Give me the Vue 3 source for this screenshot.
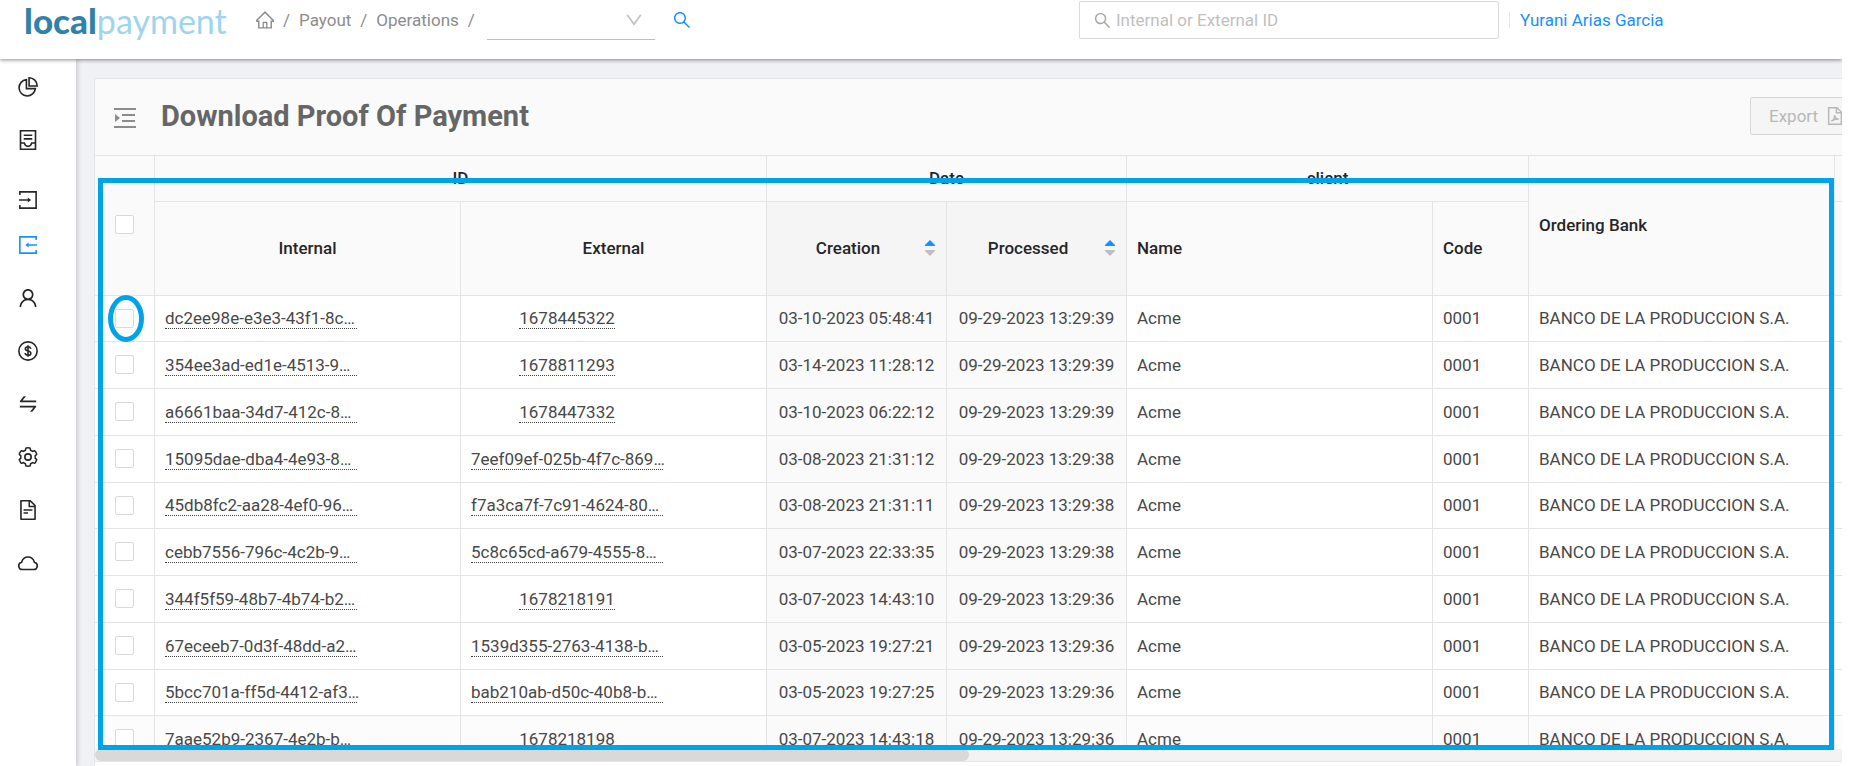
<script setup>
import { ref } from 'vue'

const query = ref('')
const allSelected = ref(false)

const rows = ref([
  ['dc2ee98e-e3e3-43f1-8c…', '1678445322', '03-10-2023 05:48:41', '09-29-2023 13:29:39'],
  ['354ee3ad-ed1e-4513-9…', '1678811293', '03-14-2023 11:28:12', '09-29-2023 13:29:39'],
  ['a6661baa-34d7-412c-8…', '1678447332', '03-10-2023 06:22:12', '09-29-2023 13:29:39'],
  ['15095dae-dba4-4e93-8…', '7eef09ef-025b-4f7c-869…', '03-08-2023 21:31:12', '09-29-2023 13:29:38'],
  ['45db8fc2-aa28-4ef0-96…', 'f7a3ca7f-7c91-4624-80…', '03-08-2023 21:31:11', '09-29-2023 13:29:38'],
  ['cebb7556-796c-4c2b-9…', '5c8c65cd-a679-4555-8…', '03-07-2023 22:33:35', '09-29-2023 13:29:38'],
  ['344f5f59-48b7-4b74-b2…', '1678218191', '03-07-2023 14:43:10', '09-29-2023 13:29:36'],
  ['67eceeb7-0d3f-48dd-a2…', '1539d355-2763-4138-b…', '03-05-2023 19:27:21', '09-29-2023 13:29:36'],
  ['5bcc701a-ff5d-4412-af3…', 'bab210ab-d50c-40b8-b…', '03-05-2023 19:27:25', '09-29-2023 13:29:36'],
  ['7aae52b9-2367-4e2b-b…', '1678218198', '03-07-2023 14:43:18', '09-29-2023 13:29:36'],
].map(([internal, external, creation, processed]) => ({
  internal, external, creation, processed,
  name: 'Acme', code: '0001', bank: 'BANCO DE LA PRODUCCION S.A.', selected: false,
})))

const isLong = (id) => id.length > 12
</script>

<template>
  <div class="page">
    <header class="topbar">
      <a class="logo" href="#" aria-label="localpayment"><span class="logo-a">local</span><span class="logo-b">payment</span></a>
      <nav class="crumbs" aria-label="Breadcrumb">
        <a href="#" aria-label="Home">
          <svg class="i-home" viewBox="64 64 896 896"><path d="M946.5 505L560.1 118.8l-25.9-25.9a31.5 31.5 0 0 0-44.4 0L77.5 505a63.9 63.9 0 0 0-18.8 46c.4 35.2 29.7 63.3 64.9 63.3h42.5V940h691.8V614.3h43.4c17.1 0 33.2-6.7 45.3-18.8a63.6 63.6 0 0 0 18.7-45.3c0-17-6.7-33.1-18.8-45.2zM568 868H456V664h112v204zm217.9-325.7V868H632V640c0-22.1-17.9-40-40-40H432c-22.1 0-40 17.9-40 40v228H238.1V542.3h-96l370-369.7 23.1 23.1L882 542.3h-96.1z" /></svg>
        </a>
        <span>/</span><a href="#">Payout</a><span>/</span><a href="#">Operations</a><span>/</span>
      </nav>
      <label class="picker">
        <select aria-label="Operation"><option></option></select>
        <svg viewBox="64 64 896 896"><path d="M884 256h-75c-5.100 0-9.900 2.500-12.900 6.600L512 654.200 227.900 262.600c-3-4.100-7.800-6.600-12.900-6.600h-75c-6.500 0-10.300 7.400-6.500 12.700l352.600 486.100c12.800 17.600 39 17.600 51.700 0l352.600-486.100c3.900-5.300.1-12.700-6.400-12.700z" /></svg>
      </label>
      <button class="find" aria-label="Search operation">
        <svg viewBox="64 64 896 896"><path d="M909.600 854.500L649.900 594.800C690.200 542.700 712 479 712 412c0-80.200-31.300-155.400-87.900-212.100-56.600-56.700-132-87.900-212.100-87.900s-155.500 31.300-212.100 87.900C143.200 256.500 112 331.800 112 412c0 80.100 31.300 155.500 87.900 212.100C256.500 680.800 331.800 712 412 712c67 0 130.600-21.800 182.700-62l259.700 259.600a8.200 8.200 0 0 0 11.600 0l43.600-43.500a8.200 8.200 0 0 0 0-11.600zM570.400 570.400C528 612.700 471.800 636 412 636s-116-23.300-158.400-65.600C211.300 528 188 471.800 188 412s23.300-116.100 65.600-158.400C296 211.300 352.200 188 412 188s116.100 23.200 158.400 65.600S636 352.200 636 412s-23.300 116.100-65.600 158.400z" /></svg>
      </button>
      <label class="search">
        <svg viewBox="64 64 896 896"><path d="M909.600 854.500L649.900 594.800C690.200 542.700 712 479 712 412c0-80.200-31.300-155.400-87.900-212.100-56.600-56.700-132-87.900-212.100-87.900s-155.500 31.300-212.100 87.900C143.200 256.500 112 331.800 112 412c0 80.100 31.300 155.500 87.900 212.100C256.500 680.800 331.800 712 412 712c67 0 130.600-21.800 182.700-62l259.700 259.600a8.200 8.200 0 0 0 11.600 0l43.600-43.500a8.200 8.200 0 0 0 0-11.600zM570.400 570.400C528 612.700 471.800 636 412 636s-116-23.300-158.400-65.600C211.300 528 188 471.800 188 412s23.300-116.100 65.600-158.400C296 211.300 352.200 188 412 188s116.100 23.200 158.400 65.600S636 352.200 636 412s-23.300 116.100-65.600 158.400z" /></svg>
        <input v-model="query" type="text" placeholder="Internal or External ID" aria-label="Internal or External ID" />
      </label>
      <div class="user"><a href="#">Yurani Arias Garcia</a></div>
    </header>

    <div class="body">
      <nav class="side" aria-label="Main menu">
        <a href="#" aria-label="Dashboard">
          <svg class="line" viewBox="64 64 896 896"><path d="M440 182A366 366 0 1 0 842 584H440z" /><path d="M560 100V464H924A364 364 0 0 0 560 100z" /></svg>
        </a>
        <a href="#" aria-label="Reports">
          <svg class="line" viewBox="64 64 896 896"><path d="M176 100H848V924H176zM320 300H704M320 460H704M176 644H344C370 760 440 796 512 796S654 760 680 644H848" /></svg>
        </a>
        <div class="group">
          <a href="#" aria-label="Payin">
            <svg class="line" viewBox="64 64 896 896"><path d="M148 290V148H876V876H148V734M110 512H520" /><path class="solid" d="M500 400L650 512L500 624z" /></svg>
          </a>
          <a href="#" class="active" aria-label="Payout">
            <svg class="line" viewBox="64 64 896 896"><path d="M876 290V148H148V876H876V734M914 512H520" /><path class="solid" d="M540 400L390 512L540 624z" /></svg>
          </a>
        </div>
        <a href="#" aria-label="Users">
          <svg viewBox="64 64 896 896"><path d="M858.5 763.6a374 374 0 0 0-80.6-119.5 375.63 375.63 0 0 0-119.5-80.6c-.4-.2-.8-.3-1.2-.5C719.5 518 760 444.7 760 362c0-137-111-248-248-248S264 225 264 362c0 82.7 40.5 156 102.8 201.1-.4.2-.8.3-1.2.5-44.8 18.9-85 46-119.5 80.6a375.63 375.63 0 0 0-80.6 119.5A371.7 371.7 0 0 0 136 901.8a8 8 0 0 0 8 8.2h60c4.4 0 7.9-3.5 8-7.8 2-77.2 33-149.5 87.8-204.3 56.7-56.7 132-87.9 212.2-87.9s155.5 31.2 212.2 87.9C779 752.7 810 825 812 902.2c.1 4.4 3.6 7.800 8 7.800h60a8 8 0 0 0 8-8.200c-1-47.800-10.900-94.300-29.500-138.200zM512 534c-45.900 0-89.100-17.900-121.600-50.400S340 407.900 340 362c0-45.900 17.900-89.100 50.400-121.600S466.100 190 512 190s89.100 17.900 121.600 50.400S684 316.100 684 362c0 45.900-17.900 89.100-50.400 121.600S557.900 534 512 534z" /></svg>
        </a>
        <a href="#" aria-label="Rates">
          <svg class="line" viewBox="64 64 896 896"><circle cx="512" cy="512" r="410" /><path d="M634 420C626 350 580 322 512 322S392 356 392 416C392 470 434 494 512 512S640 556 640 610C640 670 590 702 512 702S390 672 384 604M512 254V770" /></svg>
        </a>
        <a href="#" aria-label="Transfers">
          <svg viewBox="64 64 896 896"><path d="M847.900 592H152c-4.400 0-8 3.600-8 8v60c0 4.400 3.600 8 8 8h605.200L612.900 851c-4.100 5.200-.4 13 6.300 13h72.500c4.900 0 9.500-2.200 12.600-6.100l168.800-214.100c16.500-21 1.600-51.800-25.200-51.800zM872 356H266.800l144.300-183c4.100-5.200.4-13-6.300-13h-72.500c-4.900 0-9.500 2.200-12.600 6.100L150.900 380.200c-16.500 21-1.600 51.800 25.100 51.800h696c4.400 0 8-3.600 8-8v-60c0-4.400-3.600-8-8-8z" /></svg>
        </a>
        <a href="#" aria-label="Settings">
          <svg class="line" viewBox="64 64 896 896">
            <path transform="translate(41 41) scale(.92)" d="M924.8 625.7l-65.5-56c3.1-19 4.7-38.4 4.7-57.8s-1.6-38.8-4.7-57.8l65.5-56a32.03 32.03 0 0 0 9.3-35.2l-.9-2.6a443.74 443.74 0 0 0-79.7-137.9l-1.8-2.1a32.12 32.12 0 0 0-35.1-9.5l-81.3 28.9c-30-24.6-63.5-44-99.7-57.6l-15.7-85a32.05 32.05 0 0 0-25.8-25.7l-2.7-.5c-52.1-9.4-106.9-9.4-159 0l-2.7.5a32.05 32.05 0 0 0-25.8 25.7l-15.8 85.4a351.86 351.86 0 0 0-99 57.4l-81.9-29.1a32 32 0 0 0-35.1 9.5l-1.8 2.1a446.02 446.02 0 0 0-79.7 137.9l-.9 2.6c-4.5 12.5-.8 26.5 9.3 35.2l66.3 56.6c-3.1 18.8-4.6 38-4.6 57.1 0 19.2 1.5 38.4 4.6 57.1L99 625.5a32.03 32.03 0 0 0-9.3 35.2l.9 2.6c18.1 50.4 44.9 96.9 79.7 137.9l1.8 2.1a32.12 32.12 0 0 0 35.1 9.5l81.9-29.1c29.8 24.5 63.1 43.9 99 57.4l15.8 85.4a32.05 32.05 0 0 0 25.8 25.7l2.7.5a449.4 449.4 0 0 0 159 0l2.7-.5a32.05 32.05 0 0 0 25.8-25.7l15.7-85a350 350 0 0 0 99.7-57.6l81.3 28.9a32 32 0 0 0 35.1-9.5l1.8-2.1c34.8-41.1 61.6-87.5 79.7-137.9l.9-2.6c4.5-12.3.8-26.3-9.3-35z" />
            <circle cx="512" cy="512" r="142" />
          </svg>
        </a>
        <a href="#" aria-label="Documents">
          <svg viewBox="64 64 896 896"><path d="M854.600 288.600L639.400 73.400c-6-6-14.100-9.400-22.600-9.400H192c-17.700 0-32 14.300-32 32v832c0 17.700 14.300 32 32 32h640c17.700 0 32-14.300 32-32V311.300c0-8.500-3.400-16.700-9.400-22.700zM790.200 326H602V137.800L790.200 326zm1.800 562H232V136h302v216a42 42 0 0 0 42 42h216v494zM504 618H320c-4.400 0-8 3.600-8 8v48c0 4.400 3.600 8 8 8h184c4.400 0 8-3.600 8-8v-48c0-4.400-3.600-8-8-8zM312 490v48c0 4.400 3.600 8 8 8h384c4.400 0 8-3.600 8-8v-48c0-4.400-3.600-8-8-8H320c-4.400 0-8 3.600-8 8z" /></svg>
        </a>
        <a href="#" aria-label="Cloud">
          <svg class="line" viewBox="64 64 896 896"><path d="M265 804A165 165 0 0 1 226 478C270 330 380 246 512 246S754 330 798 478A165 165 0 0 1 759 804z" /></svg>
        </a>
      </nav>

      <main class="card">
        <div class="titlebar">
          <button class="fold" aria-label="Expand menu">
            <svg viewBox="0 0 22 20"><path d="M0 0h22v2H0zM8 6h13v2H8zM8 12h13v2H8zM0 18h22v2H0zM1 6l5 4-5 4z" /></svg>
          </button>
          <h1>Download Proof Of Payment</h1>
          <button class="export" disabled>
            Export
            <svg class="line" viewBox="64 64 896 896"><path d="M196 100H610L828 318V924H196zM580 110V350H820" /><path d="M330 770C430 730 500 600 490 470C520 620 590 670 700 660C560 650 430 690 330 770z" /></svg>
          </button>
        </div>

        <div class="tablewrap">
          <table>
            <colgroup>
              <col class="c-check" /><col class="c-wide" /><col class="c-wide" /><col class="c-date" /><col class="c-date" />
              <col class="c-wide" /><col class="c-code" /><col class="c-wide" /><col />
            </colgroup>
            <thead>
              <tr class="h1">
                <th rowspan="2" class="mid"><input v-model="allSelected" type="checkbox" aria-label="Select all" /></th>
                <th colspan="2" class="mid">ID</th>
                <th colspan="2" class="mid">Date</th>
                <th colspan="2" class="mid">client</th>
                <th rowspan="2">Ordering Bank</th>
                <th></th>
              </tr>
              <tr class="h2">
                <th class="mid">Internal</th>
                <th class="mid">External</th>
                <th v-for="label in ['Creation', 'Processed']" :key="label" class="sorted">
                  <div class="sort">
                    <span>{{ label }}</span>
                    <svg viewBox="0 0 10 16"><path class="up" d="M5 0L10 5V6H0V5z" /><path class="down" d="M0 10H10V11L5 16L0 11z" /></svg>
                  </div>
                </th>
                <th>Name</th>
                <th>Code</th>
                <th></th>
              </tr>
            </thead>
            <tbody>
              <tr v-for="row in rows" :key="row.internal">
                <td class="mid"><input v-model="row.selected" type="checkbox" :aria-label="'Select ' + row.internal" /></td>
                <td class="ids"><div class="idbox"><span class="id long">{{ row.internal }}</span></div></td>
                <td class="ids"><div class="idbox"><span class="id" :class="{ long: isLong(row.external) }">{{ row.external }}</span></div></td>
                <td class="date">{{ row.creation }}</td>
                <td class="date">{{ row.processed }}</td>
                <td>{{ row.name }}</td>
                <td>{{ row.code }}</td>
                <td>{{ row.bank }}</td>
                <td></td>
              </tr>
            </tbody>
          </table>
        </div>
        <div class="track"><div class="thumb"></div></div>
        <div class="frame"></div>
        <div class="ring"></div>
      </main>
    </div>
  </div>
</template>

<style>
body { background: #fff; }
</style>

<style scoped>
.page {
  height: 100vh;
  margin-right: 34px;
  display: flex;
  flex-direction: column;
  overflow: hidden;
  box-sizing: border-box;
  font: 400 17px/20px Roboto, "Liberation Sans", sans-serif;
  color: #484848;
  background: #f0f1f5;
}
.page * { box-sizing: border-box; }
a { color: inherit; text-decoration: none; }
button { font: inherit; padding: 0; border: 0; background: none; }
svg { display: block; fill: currentColor; flex: none; }
.line { fill: none; stroke: currentColor; stroke-width: 72; }
.solid { fill: currentColor; stroke: none; }

.topbar {
  position: relative;
  z-index: 2;
  flex: none;
  height: 59px;
  padding: 0 0 19px 24px;
  display: flex;
  align-items: center;
  background: #fff;
  box-shadow: 0 1px 4px rgba(0, 0, 0, 0.45);
}
.logo {
  flex: none;
  width: 232px;
  font: 400 34px/38px Lato, sans-serif;
  white-space: nowrap;
}
.logo-a { color: #3182a8; font-weight: 900; font-size: 35px; }
.logo-b { color: #9fd5ec; }
.crumbs { display: flex; align-items: center; gap: 9px; color: #8c8c8c; }
.i-home { width: 18px; height: 18px; }
.picker {
  position: relative;
  width: 168px;
  height: 40px;
  margin-left: 12px;
  border-bottom: 1px solid #bfbfbf;
  color: #bfbfbf;
}
.picker select { width: 100%; height: 100%; border: 0; background: none; appearance: none; }
.picker svg { position: absolute; right: 12px; top: 11px; width: 18px; height: 18px; }
.find { margin-left: 18px; color: #1890ff; }
.find svg { width: 18px; height: 18px; }
.search {
  display: flex;
  align-items: center;
  gap: 5px;
  width: 420px;
  height: 38px;
  margin-left: auto;
  padding: 0 14px;
  border: 1px solid #d9d9d9;
  border-radius: 2px;
  color: #a6a6a6;
}
.search svg { width: 17px; height: 17px; }
.search input { flex: 1; min-width: 0; padding: 0; border: 0; outline: 0; font: inherit; color: #404040; }
.search input::placeholder { color: #bfbfbf; opacity: 1; }
.user {
  flex: none;
  width: 333px;
  margin-left: 10px;
  padding-left: 10px;
  border-left: 1px solid #e8e8e8;
  line-height: 16px;
  color: #1890ff;
}

.body { flex: 1; min-height: 0; display: flex; }
.side {
  flex: none;
  width: 76px;
  padding-top: 1px;
  background: #fff;
  color: #262626;
  box-shadow: 1px 0 5px rgba(0, 0, 0, 0.2);
}
.side a { display: flex; align-items: center; height: 53px; padding-left: 18px; }
.side svg { width: 20px; height: 20px; }
.side .group { padding: 11px 0 4px; }
.side .group a { height: 45px; }
.side .active { color: #1890ff; }

.card {
  position: relative;
  flex: 1;
  min-width: 0;
  margin: 19px 0 0 18px;
  display: flex;
  flex-direction: column;
  border: 1px solid #e4e4e4;
  border-right: 0;
  border-bottom: 0;
  background: #fff;
}
.titlebar {
  flex: none;
  height: 77px;
  padding: 0 0 2px 19px;
  display: flex;
  align-items: center;
  overflow: hidden;
  background: #fafafa;
  border-bottom: 1px solid #e4e4e4;
}
.fold { padding-top: 4px; color: #8c8c8c; }
.fold svg { width: 22px; height: 20px; }
h1 { margin: 0 auto 0 25px; font-size: 29px; line-height: 36px; font-weight: 700; color: #666; }
.export {
  flex: none;
  display: flex;
  align-items: center;
  gap: 8px;
  height: 38px;
  width: 110px;
  margin-right: -18px;
  padding-left: 18px;
  border: 1px solid #d9d9d9;
  border-radius: 2px;
  background: #f5f5f5;
  color: #b8b8b8;
}
.export svg { width: 18px; height: 18px; }

.tablewrap { flex: 1; min-height: 0; overflow: hidden; }
table { width: 100%; table-layout: fixed; border-spacing: 0; }
.c-check { width: 60px; }
.c-wide { width: 306px; }
.c-date { width: 180px; }
.c-code { width: 96px; }
th, td {
  padding: 0 10px 1px;
  border-right: 1px solid #e4e4e4;
  border-bottom: 1px solid #e4e4e4;
  text-align: left;
  white-space: nowrap;
}
th:last-child, td:last-child { padding: 0; border-right: 0; }
th { padding-bottom: 2px; background: #fafafa; color: #262626; font-weight: 500; }
.h1 { height: 46px; }
.h2 { height: 94px; }
tbody tr { height: 47px; }
tbody tr:nth-child(4n + 1) { height: 46px; }
tbody tr:last-child { background: #fcfcfc; }
.mid { text-align: center; }
th.sorted { padding: 0 11px 2px 10px; background: #f5f5f5; }
.sort { display: flex; align-items: center; justify-content: space-between; }
.sort span { flex: 1; padding-right: 6px; text-align: center; }
.sort svg { width: 10px; height: 16px; }
.up { fill: #1890ff; }
.down { fill: #bfbfbf; }
td.ids { padding-bottom: 0; }
td.date { padding: 0 0 1px; text-align: center; background: #fafafa; }
.idbox { width: 192px; text-align: center; }
.id { display: inline-block; vertical-align: top; border-bottom: 1px dotted #404040; }
.id.long { display: block; text-align: left; }
input[type="checkbox"] {
  display: block;
  width: 19px;
  height: 19px;
  margin: 0 0 0 10px;
  appearance: none;
  border: 1px solid #d9d9d9;
  border-radius: 2px;
  background: #fff;
}
.track { flex: none; height: 13px; margin-bottom: 4px; background: #f3f3f3; border-bottom: 1px solid #e8e8e8; }
.thumb { width: 50%; height: 12px; border-radius: 6px; background: #d9d9d9; }

/* Highlight drawn over the table */
.frame {
  position: absolute;
  inset: 99px 8px 16px 3px;
  border: 5px solid #00a2e8;
  pointer-events: none;
}
.ring {
  position: absolute;
  left: 13px;
  top: 216px;
  width: 36px;
  height: 47px;
  border: 5px solid #00a2e8;
  border-radius: 50%;
  pointer-events: none;
}
</style>
